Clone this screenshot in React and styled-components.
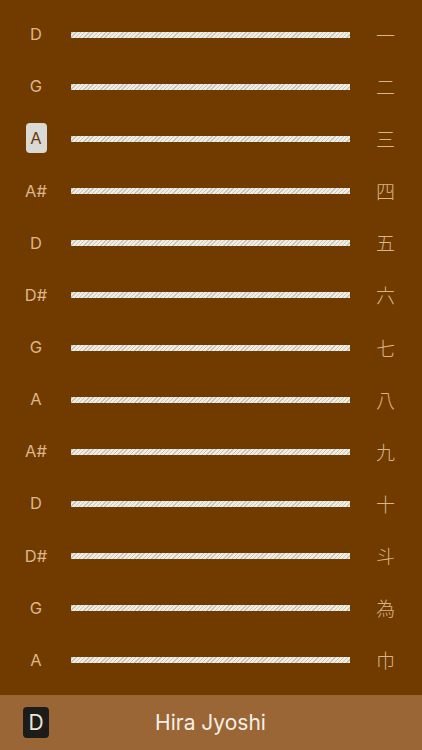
import React from 'react';
import styled, { createGlobalStyle } from 'styled-components';

const Global = createGlobalStyle`
  html, body {
    margin: 0;
    padding: 0;
    background: #713b00;
  }
  body {
    font-family: Inter, "Noto Sans CJK JP", sans-serif;
  }
`;

const Page = styled.div`
  width: 422px;
  height: 750px;
  display: flex;
  flex-direction: column;
  background: #713b00;
  overflow: hidden;
`;

const Strings = styled.div`
  height: 695px;
  box-sizing: border-box;
  padding-top: 8px;
  display: grid;
  grid-template-rows: repeat(13, 52.17px);
`;

const Row = styled.div`
  display: grid;
  grid-template-columns: 71px 279px 1fr;
  align-items: center;
`;

const Note = styled.div`
  justify-self: center;
  margin-left: 1px;
  display: flex;
  align-items: center;
  justify-content: center;
  min-width: 21px;
  height: 30px;
  border-radius: 4px;
  font-size: 16.5px;
  color: ${(p) => (p.$active ? '#6a3a0a' : '#dcb68c')};
  background: ${(p) => (p.$active ? '#d9d9d6' : 'transparent')};
`;

const String = styled.div`
  height: 6px;
  margin-top: 1px;
  background: repeating-linear-gradient(
    -45deg,
    #efeee6 0px,
    #efeee6 2px,
    #c9c5b8 2px,
    #c9c5b8 3px
  );
`;

const Kanji = styled.div`
  justify-self: center;
  margin-left: -1px;
  font-size: 19px;
  color: #d8b48c;
  font-family: "Noto Sans CJK JP", sans-serif;
  font-weight: 300;
`;

const Footer = styled.div`
  flex: 1;
  position: relative;
  display: flex;
  align-items: center;
  justify-content: center;
  background: #9a6635;
`;

const KeyBadge = styled.div`
  position: absolute;
  left: 23px;
  top: 12px;
  width: 26px;
  height: 31px;
  border-radius: 4px;
  background: #1d1c1b;
  color: #ece6d8;
  font-size: 21px;
  display: flex;
  align-items: center;
  justify-content: center;
`;

const Title = styled.div`
  font-size: 21px;
  color: #f6efe6;
  margin-left: -1px;
`;

const notes = ['D', 'G', 'A', 'A#', 'D', 'D#', 'G', 'A', 'A#', 'D', 'D#', 'G', 'A'];
const kanji = ['一', '二', '三', '四', '五', '六', '七', '八', '九', '十', '斗', '為', '巾'];

export default function App() {
  return (
    <Page>
      <Global />
      <Strings>
        {notes.map((n, i) => (
          <Row key={i}>
            <Note $active={i === 2}>{n}</Note>
            <String />
            <Kanji>{kanji[i]}</Kanji>
          </Row>
        ))}
      </Strings>
      <Footer>
        <KeyBadge>D</KeyBadge>
        <Title>Hira Jyoshi</Title>
      </Footer>
    </Page>
  );
}
